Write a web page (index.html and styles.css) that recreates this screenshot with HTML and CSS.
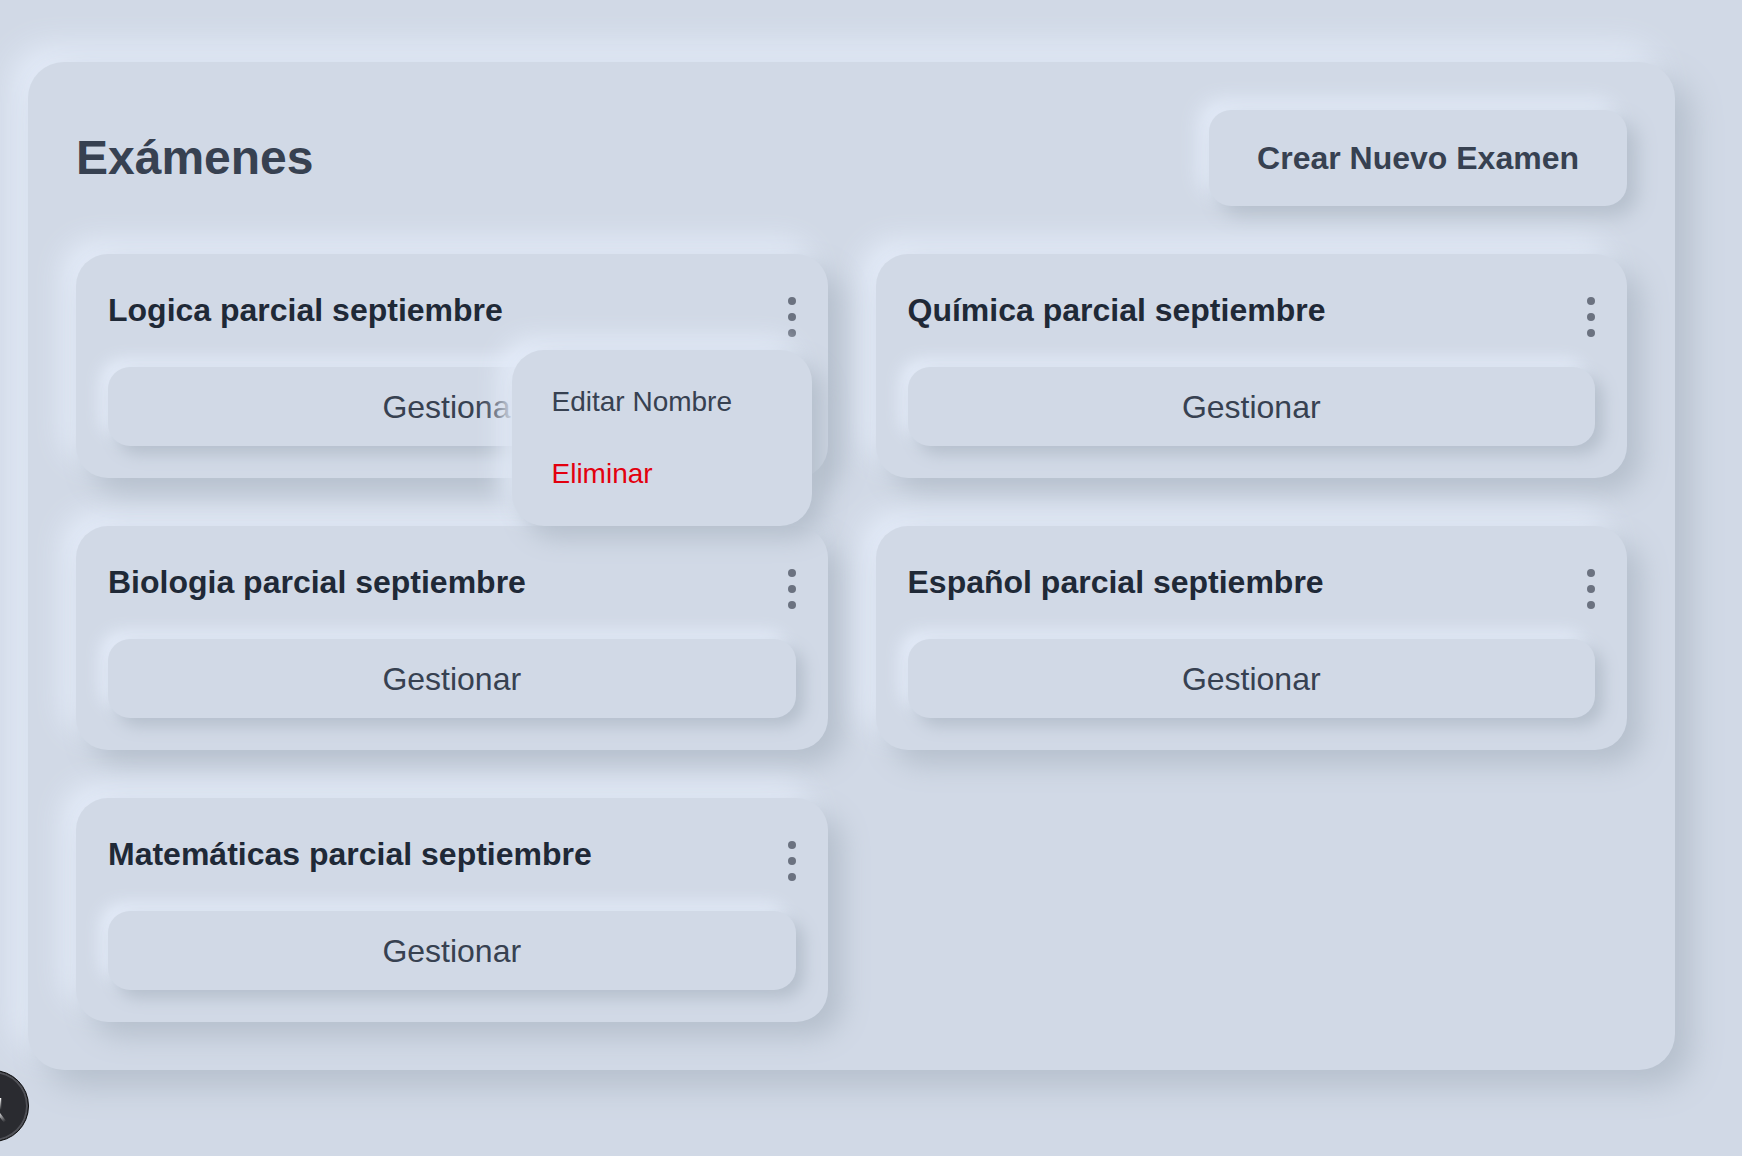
FILE: index.html
```html
<!DOCTYPE html>
<html lang="es">
<head>
<meta charset="utf-8">
<title>Exámenes</title>
<link rel="stylesheet" href="styles.css">
</head>
<body>
<main class="page">
  <section class="panel">
    <header class="panel-header">
      <h1 class="panel-title">Exámenes</h1>
      <button class="neu-btn create-btn">Crear Nuevo Examen</button>
    </header>
    <div class="grid">
      <article class="card card-open">
        <div class="card-head">
          <h2 class="card-title">Logica parcial septiembre</h2>
          <button class="dots" aria-label="Opciones"><span></span><span></span><span></span></button>
        </div>
        <button class="neu-btn manage-btn">Gestionar</button>
        <div class="menu">
          <div class="menu-item">Editar Nombre</div>
          <div class="menu-item danger">Eliminar</div>
        </div>
      </article>
      <article class="card">
        <div class="card-head">
          <h2 class="card-title">Química parcial septiembre</h2>
          <button class="dots" aria-label="Opciones"><span></span><span></span><span></span></button>
        </div>
        <button class="neu-btn manage-btn">Gestionar</button>
      </article>
      <article class="card">
        <div class="card-head">
          <h2 class="card-title">Biologia parcial septiembre</h2>
          <button class="dots" aria-label="Opciones"><span></span><span></span><span></span></button>
        </div>
        <button class="neu-btn manage-btn">Gestionar</button>
      </article>
      <article class="card">
        <div class="card-head">
          <h2 class="card-title">Español parcial septiembre</h2>
          <button class="dots" aria-label="Opciones"><span></span><span></span><span></span></button>
        </div>
        <button class="neu-btn manage-btn">Gestionar</button>
      </article>
      <article class="card">
        <div class="card-head">
          <h2 class="card-title">Matemáticas parcial septiembre</h2>
          <button class="dots" aria-label="Opciones"><span></span><span></span><span></span></button>
        </div>
        <button class="neu-btn manage-btn">Gestionar</button>
      </article>
    </div>
  </section>
</main>
<div class="dev-indicator">
  <svg class="dev-logo" viewBox="0 0 180 180" width="40" height="40" aria-hidden="true">
    <defs>
      <linearGradient id="ga" x1="109" y1="116.5" x2="144.5" y2="160.5" gradientUnits="userSpaceOnUse">
        <stop offset="0" stop-color="#fff"/>
        <stop offset="1" stop-color="#fff" stop-opacity="0"/>
      </linearGradient>
      <linearGradient id="gb" x1="121" y1="54" x2="120.8" y2="106.9" gradientUnits="userSpaceOnUse">
        <stop offset="0" stop-color="#fff"/>
        <stop offset="1" stop-color="#fff" stop-opacity="0"/>
      </linearGradient>
    </defs>
    <path d="M149.508 157.52L69.142 54H54V125.97H66.1136V69.3836L139.999 164.845C143.333 162.614 146.509 160.165 149.508 157.52Z" fill="url(#ga)"/>
    <rect x="115" y="54" width="12" height="72" fill="url(#gb)"/>
  </svg>
</div>
</body>
</html>
```
FILE: styles.css
```css
:root {
  --bg: #d1d9e6;
  --dark: #b5bfcc;
  --light: #e4ecf9;
  --text: #374151;
  --title: #1f2937;
}

* {
  box-sizing: border-box;
}

html, body {
  margin: 0;
  padding: 0;
}

body {
  background: var(--bg);
  font-family: "Liberation Sans", Arial, Helvetica, sans-serif;
  color: var(--text);
  min-height: 1156px;
  overflow: hidden;
}

.page {
  padding: 62px 0 0 28px;
}

.panel {
  width: 1647px;
  background: var(--bg);
  border-radius: 36px;
  padding: 48px;
  box-shadow: 16px 16px 32px var(--dark), -16px -16px 32px var(--light);
}

.panel-header {
  display: flex;
  align-items: center;
  justify-content: space-between;
  margin-bottom: 48px;
}

.panel-title {
  margin: 0;
  font-size: 48px;
  line-height: 56px;
  font-weight: 700;
  color: var(--text);
}

.neu-btn {
  font-family: inherit;
  border: none;
  background: var(--bg);
  color: var(--text);
  cursor: pointer;
}

.create-btn {
  height: 96px;
  padding: 0 48px;
  border-radius: 22px;
  font-size: 32px;
  font-weight: 700;
  line-height: 40px;
  box-shadow: 10px 10px 20px var(--dark), -10px -10px 20px var(--light);
}

.grid {
  display: grid;
  grid-template-columns: 1fr 1fr;
  gap: 48px;
}

.card {
  position: relative;
  background: var(--bg);
  border-radius: 32px;
  padding: 32px;
  box-shadow: 14px 14px 28px var(--dark), -14px -14px 28px var(--light);
}

.card-open {
  z-index: 2;
}

.card-head {
  display: flex;
  align-items: flex-start;
  justify-content: space-between;
  margin-bottom: 30px;
}

.card-title {
  margin: 0;
  font-size: 32px;
  line-height: 48px;
  font-weight: 700;
  color: var(--title);
}

.dots {
  display: flex;
  flex-direction: column;
  align-items: center;
  gap: 8px;
  padding: 11px 0 0;
  width: 8px;
  border: none;
  background: transparent;
  cursor: pointer;
}

.dots span {
  display: block;
  width: 8px;
  height: 8px;
  border-radius: 50%;
  background: #6b7280;
}

.manage-btn {
  display: block;
  width: 100%;
  height: 79px;
  border-radius: 22px;
  font-size: 32px;
  line-height: 40px;
  font-weight: 400;
  box-shadow: 8px 8px 16px var(--dark), -8px -8px 16px var(--light);
}

.menu {
  position: absolute;
  top: 96px;
  right: 16px;
  width: 300px;
  padding: 16px 0;
  border-radius: 32px;
  background: var(--bg);
  box-shadow: 12px 12px 24px var(--dark), -12px -12px 24px var(--light);
  z-index: 5;
}

.menu-item {
  height: 72px;
  line-height: 72px;
  padding: 0 40px;
  font-size: 28px;
  color: var(--text);
}

.menu-item.danger {
  color: #e3000f;
}

.dev-indicator {
  position: fixed;
  left: -43px;
  bottom: 14px;
  width: 72px;
  height: 72px;
  border-radius: 50%;
  background: #2a2b30;
  border: 1px solid #0b0b0c;
  box-shadow: inset 0 0 0 2px #505157;
  display: flex;
  align-items: center;
  justify-content: center;
}

.dev-logo {
  display: block;
}
```
